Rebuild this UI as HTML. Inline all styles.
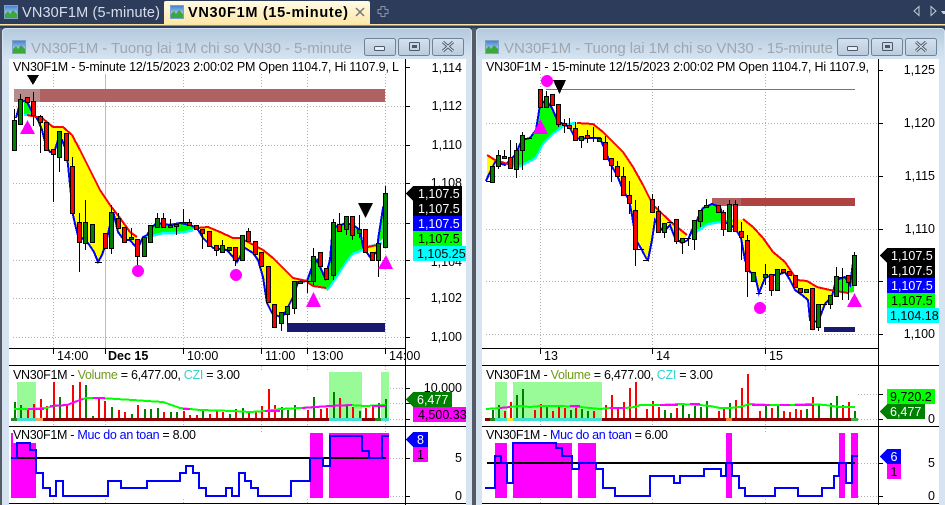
<!DOCTYPE html>
<html><head><meta charset="utf-8"><style>
html,body{margin:0;padding:0;background:#2d3c5a;width:945px;height:505px;overflow:hidden}
svg{display:block}
text{font-family:"Liberation Sans",sans-serif;font-size:12.5px;fill:#000}
.ti{font-size:15px;fill:#a0a6ae}
.w{fill:#fff}
.g{stroke:#b0b0b0;stroke-width:1;stroke-dasharray:1 2;fill:none}
.k{stroke:#000;fill:none}
.rb{fill:#f00;stroke:#000;stroke-width:1}
.gb{fill:#008000;stroke:#000;stroke-width:1}
.bl{fill:none;stroke:#00f;stroke-width:2}
.rl{fill:none;stroke:#f00;stroke-width:2}
.cy{fill:none;stroke:#0ff;stroke-width:3}
.vr{stroke:#f00;stroke-width:2;fill:none}
.vg{stroke:#008000;stroke-width:2;fill:none}
.ma{stroke:#0f0;stroke-width:2;fill:none}
.mm{stroke:#f0f;stroke-width:2;fill:none}
.st{fill:none;stroke:#00f;stroke-width:2}
</style></head><body>
<svg width="945" height="505" viewBox="0 0 945 505" xmlns="http://www.w3.org/2000/svg" shape-rendering="crispEdges">
<defs>
<linearGradient id="tab" x1="0" y1="0" x2="0" y2="1"><stop offset="0" stop-color="#fffbe6"/><stop offset="1" stop-color="#fde8a8"/></linearGradient>
<linearGradient id="win" x1="0" y1="0" x2="0" y2="1"><stop offset="0" stop-color="#b4cade"/><stop offset="1" stop-color="#d6e4f2"/></linearGradient>
<linearGradient id="btn" x1="0" y1="0" x2="0" y2="1"><stop offset="0" stop-color="#d5e1ee"/><stop offset="1" stop-color="#b9cbdc"/></linearGradient>
<linearGradient id="sky" x1="0" y1="0" x2="0" y2="1"><stop offset="0" stop-color="#3f7fd0"/><stop offset="1" stop-color="#e6f2fc"/></linearGradient>
<g id="ic"><rect x=".5" y=".5" width="13" height="13" fill="url(#sky)" stroke="#7f9fc6"/><path d="M1 13V9L4 6L6 9L9 5L13 9V13Z" fill="#3aa83a" shape-rendering="auto"/></g>
<g id="btns" shape-rendering="auto">
<rect x=".5" y=".5" width="31" height="17" rx="2" fill="url(#btn)" stroke="#6f8298"/>
<rect x="34.5" y=".5" width="31" height="17" rx="2" fill="url(#btn)" stroke="#6f8298"/>
<rect x="68.5" y=".5" width="31" height="17" rx="2" fill="url(#btn)" stroke="#6f8298"/>
<rect x="10.5" y="8.5" width="10" height="4" rx="1" fill="#e8eef5" stroke="#4a5868"/>
<rect x="45.5" y="4.5" width="10" height="8" rx="1" fill="none" stroke="#4a5868" stroke-width="1"/><rect x="48" y="7" width="5" height="3" fill="#4a5868"/>
<path d="M79 4L89 13M89 4L79 13" stroke="#4a5868" stroke-width="3" fill="none"/><path d="M79 4L89 13M89 4L79 13" stroke="#e8eef5" stroke-width="1" fill="none"/>
</g>
</defs>

<!-- top bar -->
<rect width="945" height="505" fill="#2d3c5a"/>
<path d="M164 24V3Q164 1 166 1H368Q370 1 370 3V24Z" fill="url(#tab)" shape-rendering="auto"/>
<rect y="24" width="945" height="1.5" fill="#fde6a0"/>
<use href="#ic" x="4" y="5"/><use href="#ic" x="170" y="5"/>
<text x="22" y="17" style="font-size:14.5px;fill:#d6deea" textLength="138">VN30F1M (5-minute)</text>
<text x="188" y="17" style="font-size:14.5px;font-weight:bold" textLength="160">VN30F1M (15-minute)</text>
<path d="M356 8L364 16M364 8L356 16" stroke="#777" stroke-width="1.5" shape-rendering="auto"/>
<path d="M381 6.5h4v3h3v4h-3v3h-4v-3h-3v-4h3z" fill="none" stroke="#8a94a6"/>
<path d="M919 6.5V15.5L914 11Z M931 6.5V15.5L936 11Z" fill="none" stroke="#c4ccd8" shape-rendering="auto"/>
<path d="M941 11H945V14H943Z" fill="#c4ccd8"/>

<!-- gaps -->
<rect x="0" y="28" width="2" height="477" fill="#555b66"/>
<rect x="472" y="28" width="4" height="477" fill="#555b66"/>

<!-- windows -->
<path d="M2 505V32Q2 28 6 28H468Q472 28 472 32V505Z" fill="#d6e4f2" shape-rendering="auto"/>
<path d="M3 59V32Q3 29 6 29H468Q471 29 471 32V59Z" fill="url(#win)" shape-rendering="auto"/>
<path d="M476 505V32Q476 28 480 28H941Q945 28 945 32V505Z" fill="#d6e4f2" shape-rendering="auto"/>
<path d="M477 59V32Q477 29 480 29H941Q944 29 944 32V59Z" fill="url(#win)" shape-rendering="auto"/>
<rect x="9" y="59" width="457" height="446" fill="#fff"/>
<rect x="482" y="59" width="457" height="446" fill="#fff"/>
<use href="#ic" x="12" y="40"/><use href="#ic" x="485" y="40"/>
<text class="ti" x="31" y="53" textLength="321">VN30F1M - Tuong lai 1M chi so VN30 - 5-minute</text>
<text class="ti" x="504" y="53" textLength="329">VN30F1M - Tuong lai 1M chi so VN30 - 15-minute</text>
<use href="#btns" x="364" y="38"/><use href="#btns" x="837" y="38"/>

<!-- LEFT main grid -->
<path class="g" d="M13 106.5H405M13 145.5H405M13 183.5H405M13 223.5H405M13 260.5H405M13 298.5H405M13 337.5H405M53.5 74V348M183.5 74V348M261.5 74V348M307.5 74V348M385.5 74V348"/>
<path d="M105.5 74V348" stroke="#bdbdbd" fill="none"/>
<rect x="14" y="89" width="26" height="13" fill="#b98a8a"/>
<rect x="40" y="89" width="345" height="13" fill="#b06262"/>
<rect x="287" y="323" width="98" height="9" fill="#191970"/>

<!-- LEFT cloud -->
<polygon fill="#00ffff" points="24,112 33,112 33,116 24,116"/>
<polygon fill="#00ff00" points="24,100 30,104 33,113 24,114"/>
<polygon fill="#ffff00" points="33,114 42,118 53,127 63,127 72,135 80,150 90,170 100,190 110,205 120,218 130,232 137,237 135,246 130,240 124,240 118,232 114,215 110,225 106,243 102,255 98,262 94,252 88,243 82,238 79,240 76,228 73,215 70,185 68,165 66,150 62,140 58,140 54,153 50,152 46,146 42,130 38,120"/>
<polyline class="cy" points="143,238 163,233 173,233 183,232 193,230"/>
<polygon fill="#00ff00" points="143,237 147,235 152,227 157,223 170,225 180,223 190,225 197,228 193,229 183,231 173,232 163,232"/>
<polygon fill="#ffff00" points="197,228 208,227 220,232 233,238 240,238 250,243 263,250 273,258 283,268 293,278 307,281 298,282 293,297 288,307 282,318 272,313 267,303 263,277 258,260 253,253 245,248 237,262 233,257 227,250 213,248 203,238"/>
<polyline class="cy" points="326,290 330,286 338,274 345,263 352,254 362,250 368,248"/>
<polygon fill="#00ff00" points="307,281 312,267 317,260 325,278 330,260 333,225 338,227 345,223 353,225 360,230 363,247 368,247 362,249 352,253 345,262 338,273 330,285 326,289 313,286"/>
<polyline class="cy" points="368,247 377,245 382,243"/>
<polygon fill="#ffff00" points="368,247 377,244 377,252 370,257"/>
<polygon fill="#00ff00" points="377,244 383,238 383,208 378,240"/>
<polyline class="bl" points="16,118 20,103 26,100 30,108 33,113 38,120 42,130 46,146 50,152 54,153 58,140 62,140 66,150 68,165 70,185 73,215 76,228 79,240 82,238 88,243 94,252 98,262 102,255 106,243 110,225 114,215 118,232 124,240 130,240 135,246 138,248 143,237 147,235 152,227 157,223 170,225 180,223 190,225 197,228 203,238 213,248 227,250 233,257 237,262 245,248 253,253 258,260 263,277 267,303 272,313 282,318 288,307 293,297 298,282 307,281 312,267 317,260 325,278 330,260 333,225 338,227 345,223 353,225 360,230 363,247 370,257 377,252 378,240 383,208 386,200"/>
<polyline class="rl" points="27,115 42,118 53,127 63,127 72,135 80,150 90,170 100,190 110,205 120,218 130,232 137,237"/>
<polyline class="rl" points="197,228 208,227 220,232 233,238 240,238 250,243 263,250 273,258 283,268 293,278 307,281"/>
<polyline class="rl" points="307,282 313,286 326,288"/>
<polyline class="rl" points="368,247 377,245"/>

<!-- LEFT candles -->
<path class="k" d="M14.5 109V150M20.5 94V99M33.5 92V126M40.5 115V153M53.5 154V202M59.5 157V172M72.5 157V166M79.5 213V272M85.5 200V250M111.5 205V254M118.5 213V218M131.5 228V237M137.5 256V266M157.5 213V218M163.5 213V218M170.5 219V225M176.5 226V235M183.5 209V222M189.5 219V222M202.5 233V249M216.5 250V256M222.5 240V245M235.5 260V266M248.5 228V231M281.5 323V331M287.5 314V325M294.5 308V314M307.5 281V293M313.5 248V285M333.5 219V280M339.5 213V224M346.5 229V235M352.5 235V240M359.5 215V238M378.5 260V277M385.5 186V193M95 262.5H102M180 222.5H187M304 281.5H311"/>
<path class="gb" d="M12.5 120.5h4V150.5h-4zM18.5 99.5h4V124.5h-4zM57.5 131.5h4V157.5h-4zM83.5 222.5h4V243.5h-4zM90.5 224.5h4V242.5h-4zM109.5 212.5h4V248.5h-4zM129.5 237.5h4V239.5h-4zM142.5 237.5h4V256.5h-4zM148.5 225.5h4V242.5h-4zM155.5 218.5h4V227.5h-4zM168.5 225.5h4V227.5h-4zM174.5 224.5h4V226.5h-4zM220.5 245.5h4V252.5h-4zM227.5 247.5h4V250.5h-4zM240.5 235.5h4V260.5h-4zM279.5 312.5h4V323.5h-4zM285.5 306.5h4V314.5h-4zM292.5 281.5h4V308.5h-4zM298.5 281.5h4V283.5h-4zM311.5 256.5h4V281.5h-4zM331.5 222.5h4V275.5h-4zM344.5 216.5h4V229.5h-4zM357.5 229.5h4V233.5h-4zM376.5 243.5h4V260.5h-4zM383.5 193.5h4V247.5h-4z"/>
<path class="rb" d="M25.5 97.5h4V102.5h-4zM31.5 101.5h4V115.5h-4zM38.5 116.5h4V122.5h-4zM44.5 122.5h4V150.5h-4zM51.5 149.5h4V154.5h-4zM64.5 133.5h4V160.5h-4zM70.5 166.5h4V213.5h-4zM77.5 222.5h4V242.5h-4zM103.5 233.5h4V248.5h-4zM116.5 218.5h4V228.5h-4zM122.5 227.5h4V242.5h-4zM135.5 239.5h4V256.5h-4zM161.5 218.5h4V227.5h-4zM187.5 222.5h4V225.5h-4zM194.5 225.5h4V229.5h-4zM200.5 229.5h4V233.5h-4zM207.5 231.5h4V246.5h-4zM214.5 245.5h4V250.5h-4zM233.5 247.5h4V260.5h-4zM246.5 231.5h4V241.5h-4zM253.5 241.5h4V254.5h-4zM259.5 252.5h4V266.5h-4zM266.5 266.5h4V302.5h-4zM272.5 304.5h4V327.5h-4zM318.5 252.5h4V266.5h-4zM324.5 268.5h4V279.5h-4zM337.5 224.5h4V231.5h-4zM350.5 216.5h4V235.5h-4zM363.5 229.5h4V252.5h-4zM370.5 252.5h4V260.5h-4z"/>

<!-- LEFT markers -->
<polygon points="27,75 39,75 33,85"/>
<polygon fill="#ff00ff" points="27.5,120 35,134 20,134"/>
<circle cx="138" cy="271" r="6" fill="#ff00ff"/>
<circle cx="236" cy="275" r="6" fill="#ff00ff"/>
<polygon fill="#ff00ff" points="313.5,292 321,307 306,307"/>
<polygon fill="#ff00ff" points="386,255 393,269 378,269"/>
<polygon points="358,203 373,203 365.5,218"/>

<!-- left header & axes -->
<rect x="9" y="59" width="396" height="15" fill="#fff"/>
<text x="13" y="71" textLength="386">VN30F1M - 5-minute 12/15/2023 2:00:02 PM Open 1104.7, Hi 1107.9, L</text>
<path class="k" d="M9 348.5H405.5M9 365.5H466M9 426.5H466M9 503.5H466M405.5 59V505"/>
<path class="k" d="M53.5 348V354M105.5 348V354M183.5 348V354M261.5 348V354M307.5 348V354M385.5 348V354M405 67.5H410M405 106.5H410M405 145.5H410M405 183.5H410M405 223.5H410M405 260.5H410M405 298.5H410M405 337.5H410"/>
<g text-anchor="end">
<text x="462" y="72">1,114</text><text x="462" y="110">1,112</text><text x="462" y="149">1,110</text><text x="462" y="187">1,108</text><text x="462" y="302">1,102</text><text x="462" y="341">1,100</text><text x="462" y="266">1,104</text>
</g>
<text x="57" y="360">14:00</text><text x="108" y="360" style="font-weight:bold">Dec 15</text><text x="187" y="360">10:00</text><text x="265" y="360">11:00</text><text x="312" y="360">13:00</text><text x="389" y="360">14:00</text>

<!-- LEFT price labels -->
<polygon points="406,193.5 413,186 413,201"/>
<rect x="413" y="186" width="49" height="15"/><rect x="413" y="201" width="49" height="15"/>
<rect x="413" y="216" width="49" height="15" fill="#0000ff"/><rect x="413" y="231" width="49" height="15" fill="#00ff00"/>
<rect x="413" y="246" width="53" height="15" fill="#00ffff"/>
<text class="w" x="418" y="198">1,107.5</text><text class="w" x="418" y="213">1,107.5</text><text class="w" x="418" y="228">1,107.5</text><text x="418" y="243">1,107.5</text><text x="417" y="258">1,105.25</text>

<!-- LEFT volume -->
<rect x="17" y="382" width="19" height="36" fill="#98fb98"/>
<rect x="329" y="372" width="33" height="46" fill="#98fb98"/>
<rect x="381" y="372" width="8" height="46" fill="#98fb98"/>
<rect x="11" y="418" width="378" height="3" fill="#8b0000"/>
<rect x="11" y="418" width="6" height="3" fill="#228b22"/><rect x="17" y="418" width="19" height="3" fill="#40e0d0"/><rect x="36" y="418" width="7" height="3" fill="#f4a460"/>
<rect x="329" y="418" width="33" height="3" fill="#40e0d0"/><rect x="375" y="418" width="6" height="3" fill="#228b22"/><rect x="381" y="418" width="8" height="3" fill="#40e0d0"/>
<path class="vr" d="M28 409V418M34 404V418M41 399V418M47 406V418M54 382V418M67 406V418M73 385V418M80 382V418M99 398V418M105 401V418M119 410V418M125 412V418M138 405V418M164 412V418M184 411V418M190 415V418M197 415V418M210 414V418M217 411V418M223 412V418M236 409V418M249 413V418M256 411V418M262 406V418M269 389V418M275 405V418M308 410V418M321 409V418M327 408V418M340 398V418M353 407V418M366 408V418M373 405V418"/>
<path class="vg" d="M15 402V418M21 405V418M60 397V418M86 385V418M93 416V418M112 407V418M132 414V418M145 409V418M151 409V418M158 408V418M171 412V418M177 412V418M203 410V418M230 414V418M243 408V418M282 407V418M288 410V418M295 405V418M314 397V418M334 392V418M347 404V418M360 411V418M379 403V418M386 399V418"/>
<polyline class="ma" points="14,409 28,409 46,408 54,406 67,405 80,400 86,398 100,398 133,400 147,401 163,402 180,408 200,410 233,411 250,412 265,411 280,409 300,408 330,406 350,405 365,406 386,405"/>
<path class="mm" d="M28 409H44M50 406L67 405L80 400L83 399M93 398H105M183 409H190M265 411H280M302 408L330 406L352 405M372 406H386"/>
<text x="13" y="379" textLength="227">VN30F1M - <tspan fill="#6f9a1a">Volume</tspan> = 6,477.00, <tspan fill="#38d0d0">CZI</tspan> = 3.00</text>
<path class="g" d="M390 388.5H405M390 403.5H405M390 419.5H405M53.500 421V425M105.500 421V425M183.500 421V425M261.500 421V425M307.500 421V425M385.500 421V425M261.500 366V371M307.500 366V371M385.500 366V371M53.500 499V503M105.500 499V503M183.500 499V503M261.500 428V432M307.500 499V503M385.500 428V432"/>
<path class="k" d="M405 388.5H410M405 403.5H410M405 419.5H410"/>
<text x="462" y="392" text-anchor="end">10,000</text>
<rect x="413" y="407" width="53" height="15" fill="#ff00ff"/>
<polygon points="406,399.5 413,392 413,407" fill="#008000"/><rect x="413" y="392" width="39" height="15" fill="#008000"/>
<text class="w" x="417" y="404">6,477</text><text x="418" y="419">4,500.33</text>

<!-- LEFT safety -->
<rect x="11" y="433" width="25" height="65" fill="#ff00ff"/>
<rect x="310" y="433" width="13" height="65" fill="#ff00ff"/>
<rect x="329" y="433" width="60" height="65" fill="#ff00ff"/>
<rect x="13" y="429" width="184" height="14" fill="#fff"/>
<path d="M11 458H386" stroke="#000" stroke-width="2"/>
<polyline class="st" points="11,458 17,458 17,443 30,443 30,450 36,450 36,473 43,473 43,488 50,488 50,496 56,496 56,481 63,481 63,496 108,496 108,481 121,481 121,488 147,488 147,481 180,481 180,473 186,473 186,466 193,466 193,473 199,473 199,488 206,488 206,496 226,496 226,488 232,488 232,496 239,496 239,473 245,473 245,481 251,481 251,488 258,488 258,496 291,496 291,481 310,481 310,458 323,458 323,466 330,466 330,436 362,436 362,451 369,451 369,458 382,458 382,436 389,436"/>
<text x="13" y="439" textLength="183">VN30F1M - <tspan fill="#0000ff">Muc do an toan</tspan> = 8.00</text>
<path class="g" d="M390 458.5H405M390 496.5H405"/>
<path class="k" d="M405 458.5H410M405 496.5H410"/>
<text x="462" y="462" text-anchor="end">5</text><text x="462" y="500" text-anchor="end">0</text>
<polygon points="406,439.5 413,432 413,447" fill="#0000ff"/><rect x="413" y="432" width="15" height="15" fill="#0000ff"/>
<rect x="413" y="447" width="15" height="15" fill="#ff00ff"/>
<text class="w" x="420.500" y="444" text-anchor="middle">8</text><text x="420.500" y="459" text-anchor="middle">1</text>

<!-- RIGHT grid -->
<path class="g" d="M486 123.5H878M486 176.5H878M486 229.5H878M486 281.5H878M486 334.5H878M540.500 74V348M652.500 74V348M765.500 74V348"/>
<path d="M546 89.500H855" stroke="#a96060" fill="none"/>
<rect x="712" y="198" width="29" height="8" fill="#b06060"/><rect x="741" y="198" width="114" height="8" fill="#b04242"/>
<rect x="824" y="327" width="31" height="5" fill="#191970"/>

<!-- RIGHT cloud -->
<polygon fill="#ffff00" points="487,155 495,160 500,162 495,166 490,172 487,181"/>
<polyline class="cy" points="508,165 520,166 535,158 543,143 552,134 563,126 575,123"/>
<polygon fill="#00ff00" points="500,162 505,165 515,155 522,140 530,138 536,130 540,105 546,100 552,108 558,122 564,124 575,122 563,125 552,133 543,142 535,157 520,165 508,164"/>
<polygon fill="#ffff00" points="577,123 593,124 603,132 613,142 623,152 633,167 643,185 653,205 672,223 687,235 682,243 675,238 670,225 664,232 658,225 655,220 652,240 648,260 646,258 642,250 636,240 632,215 629,200 623,190 617,175 611,165 605,150 600,138 587,138 581,139 575,138 570,128"/>
<polyline class="cy" points="693,234 707,224 719,222 743,221"/>
<polygon fill="#00ff00" points="688,238 692,230 698,218 703,208 712,204 720,207 725,222 735,221 743,220 723,220 719,221 707,223 693,233"/>
<polygon fill="#ffff00" points="743,219 753,227 763,238 773,252 785,262 797,280 807,281 817,287 830,290 832,296 825,304 818,322 810,320 808,300 802,295 795,290 790,280 785,272 778,275 772,275 765,278 759,293 755,275 750,272 745,260 741,238 735,228 725,222"/>
<polygon fill="#00ff00" points="832,292 836,278 845,277 850,285 854,258 854,292 848,293"/>
<polyline class="bl" points="486,181 490,172 495,162 505,165 515,155 522,140 530,138 536,130 540,105 546,100 552,108 558,122 564,124 570,128 575,138 581,139 587,138 600,138 605,150 611,165 617,175 623,190 629,200 632,215 636,240 642,250 646,258 648,260 652,240 655,220 658,225 664,232 670,225 675,238 682,243 688,240 692,230 698,218 703,208 712,204 720,207 725,222 735,228 741,238 745,260 750,272 755,275 759,293 765,278 772,275 778,275 785,272 790,280 795,290 802,295 808,300 810,320 818,322 825,304 832,296 836,280 845,277 850,285 854,255"/>
<polyline class="rl" points="487,155 495,160 508,164"/>
<polyline class="rl" points="577,123 593,124 603,132 613,142 623,152 633,167 643,185 653,205 672,223 687,235"/>
<polyline class="rl" points="743,219 753,227 763,238 773,252 785,262 797,280 807,281 817,287 830,290 848,293"/>

<!-- RIGHT candles -->
<path class="k" d="M498.500 150V169M504.500 150V156M510.500 140V157M516.500 143V178M522.500 132V170M546.500 91V96M558.500 124V127M564.500 119V133M569.500 118V125M575.500 122V128M581.500 140V148M587.500 130V143M593.500 127V142M605.500 136V142M611.500 165V182M617.500 161V166M623.500 167V176M629.500 181V214M635.500 200V266M652.500 194V199M658.500 206V211M664.500 232V238M676.500 241V244M682.500 242V254M688.500 238V246M694.500 239V250M700.500 221V227M706.500 199V205M723.500 210V236M729.500 200V204M735.500 200V204M741.500 222V260M747.500 235V297M765.500 264V285M771.500 290V296M818.500 327V331M830.500 304V309M836.500 267V276M842.500 268V300M848.500 282V300M854.500 252V255M486 181.500H492M525 138.500H532M590 137.500H596M638 249.500H644M643 260.500H649M667 222.500H673M685 238.500H691M756 293.500H762M821 304.500H827M839 277.500H845"/>
<path class="gb" d="M490.500 166.500h4V182.500h-4zM496.500 155.500h4V166.500h-4zM514.500 150.500h4V169.500h-4zM520.500 135.500h4V150.500h-4zM544.500 96.500h4V107.500h-4zM579.500 136.500h4V140.500h-4zM597.500 138.500h4V141.500h-4zM662.500 223.500h4V232.500h-4zM680.500 238.500h4V242.500h-4zM692.500 220.500h4V239.500h-4zM698.500 210.500h4V221.500h-4zM704.500 205.500h4V207.500h-4zM727.500 204.500h4V231.500h-4zM751.500 272.500h4V281.500h-4zM763.500 274.500h4V277.500h-4zM775.500 269.500h4V290.500h-4zM804.500 289.500h4V292.500h-4zM816.500 304.500h4V327.500h-4zM828.500 295.500h4V304.500h-4zM834.500 276.500h4V296.500h-4zM852.500 255.500h4V285.500h-4z"/>
<path class="rb" d="M502.500 156.500h4V158.500h-4zM508.500 157.500h4V168.500h-4zM538.500 89.500h4V107.500h-4zM550.500 94.500h4V105.500h-4zM556.500 104.500h4V124.500h-4zM562.500 123.500h4V125.500h-4zM567.500 125.500h4V128.500h-4zM573.500 128.500h4V140.500h-4zM585.500 135.500h4V138.500h-4zM603.500 142.500h4V159.500h-4zM609.500 158.500h4V165.500h-4zM615.500 166.500h4V176.500h-4zM621.500 176.500h4V195.500h-4zM627.500 195.500h4V203.500h-4zM633.500 210.500h4V249.500h-4zM650.500 199.500h4V212.500h-4zM656.500 211.500h4V232.500h-4zM674.500 219.500h4V241.500h-4zM716.500 205.500h4V212.500h-4zM721.500 212.500h4V229.500h-4zM733.500 204.500h4V231.500h-4zM739.500 231.500h4V237.500h-4zM745.500 240.500h4V271.500h-4zM769.500 274.500h4V290.500h-4zM781.500 269.500h4V272.500h-4zM787.500 271.500h4V275.500h-4zM793.500 275.500h4V287.500h-4zM798.500 288.500h4V292.500h-4zM810.500 288.500h4V329.500h-4zM846.500 275.500h4V282.500h-4z"/>

<!-- RIGHT markers -->
<circle cx="547" cy="81" r="6" fill="#ff00ff"/>
<polygon points="553,80 566,80 559.500,94"/>
<polygon fill="#ff00ff" points="540.500,119 548,134 533,134"/>
<circle cx="760" cy="308" r="6" fill="#ff00ff"/>
<polygon fill="#ff00ff" points="854.500,293 862,307 847,307"/>

<!-- right header & axes -->
<rect x="482" y="59" width="396" height="15" fill="#fff"/>
<text x="486" y="71" textLength="383">VN30F1M - 15-minute 12/15/2023 2:00:02 PM Open 1104.7, Hi 1107.9,</text>
<path class="k" d="M482 348.500H878.500M482 365.500H939M482 426.500H939M482 503.500H939M878.500 59V505"/>
<path class="k" d="M540.500 348V354M652.500 348V354M765.500 348V354M878 70.500H883M878 123.500H883M878 176.500H883M878 229.500H883M878 281.500H883M878 334.500H883"/>
<g text-anchor="end">
<text x="935" y="74">1,125</text><text x="935" y="127">1,120</text><text x="935" y="180">1,115</text><text x="935" y="233">1,110</text><text x="935" y="338">1,100</text>
</g>
<text x="544" y="360">13</text><text x="656" y="360">14</text><text x="769" y="360">15</text>
<polygon points="880,255.500 887,248 887,263"/>
<rect x="887" y="248" width="48" height="15"/><rect x="887" y="263" width="48" height="15"/>
<rect x="887" y="278" width="48" height="15" fill="#0000ff"/><rect x="887" y="293" width="48" height="15" fill="#00ff00"/>
<rect x="887" y="308" width="52" height="15" fill="#00ffff"/>
<text class="w" x="891" y="260">1,107.5</text><text class="w" x="891" y="275">1,107.5</text><text class="w" x="891" y="290">1,107.5</text><text x="891" y="305">1,107.5</text><text x="890" y="320">1,104.18</text>

<!-- RIGHT volume -->
<rect x="495" y="382" width="12" height="36" fill="#98fb98"/>
<rect x="513" y="382" width="89" height="36" fill="#98fb98"/>
<rect x="485" y="418" width="373" height="3" fill="#8b0000"/>
<rect x="490" y="418" width="5" height="3" fill="#228b22"/><rect x="495" y="418" width="12" height="3" fill="#40e0d0"/><rect x="507" y="418" width="6" height="3" fill="#ffe020"/><rect x="513" y="418" width="89" height="3" fill="#40e0d0"/><rect x="726" y="418" width="6" height="3" fill="#f08030"/><rect x="851" y="418" width="7" height="3" fill="#3cb043"/>
<path class="vr" d="M505 411V418M511 402V418M535 410V418M541 404V418M553 411V418M559 407V418M565 408V418M576 408V418M594 411V418M606 405V418M612 395V418M618 407V418M624 402V418M630 388V418M636 382V418M647 409V418M653 401V418M659 407V418M677 408V418M719 411V418M724 407V418M736 400V418M742 388V418M748 374V418M760 411V418M772 408V418M784 411V418M790 412V418M796 409V418M801 410V418M813 397V418M843 405V418M849 402V418"/>
<path class="vg" d="M493 410V418M499 405V418M517 395V418M523 389V418M547 407V418M571 410V418M582 409V418M588 411V418M665 410V418M671 413V418M683 405V418M689 414V418M695 406V418M701 407V418M707 401V418M730 403V418M766 404V418M778 405V418M807 409V418M819 405V418M831 403V418M837 396V418M855 411V418"/>
<polyline class="ma" points="486,409 500,408 510,407 520,406 530,407 540,406 560,406 580,407 590,408 600,409 610,408 625,408 635,407 640,405 660,405 680,404 700,405 710,406 720,408 730,408 740,407 750,404 770,405 790,405 810,404 825,405 840,407 855,407"/>
<path class="mm" d="M500 408L510 407M570 406H580M610 408H625M660 405H678M690 404H700M752 405H770M780 405H790M795 405H812"/>
<text x="486" y="379" textLength="227">VN30F1M - <tspan fill="#6f9a1a">Volume</tspan> = 6,477.00, <tspan fill="#38d0d0">CZI</tspan> = 3.00</text>
<path class="g" d="M858 394.500H878M858 419.500H878M540.500 421V425M652.500 421V425M765.500 421V425M765.500 366V371M765.500 428V432M540.500 499V503M652.500 499V503M765.500 499V503"/>
<path class="k" d="M878 394.500H883M878 419.500H883"/>
<text x="935" y="423" text-anchor="end">0</text>
<rect x="887" y="389" width="48" height="15" fill="#00ff00"/><text x="890" y="401">9,720.2</text>
<polygon points="880,411.500 887,404 887,419" fill="#008000"/><rect x="887" y="404" width="38" height="15" fill="#008000"/>
<text class="w" x="890" y="416">6,477</text>

<!-- RIGHT safety -->
<rect x="495" y="433" width="12" height="65" fill="#ff00ff"/><rect x="513" y="433" width="59" height="65" fill="#ff00ff"/><rect x="578" y="433" width="18" height="65" fill="#ff00ff"/><rect x="726" y="433" width="6" height="65" fill="#ff00ff"/><rect x="839" y="433" width="6" height="65" fill="#ff00ff"/><rect x="851" y="433" width="7" height="65" fill="#ff00ff"/>
<rect x="486" y="429" width="183" height="14" fill="#fff"/>
<path d="M487 463H855" stroke="#000" stroke-width="2"/>
<polyline class="st" points="485,488 495,488 495,456 501,456 501,463 507,463 507,483 513,483 513,443 556,443 556,448 562,448 562,456 572,456 572,469 579,469 579,463 596,463 596,469 603,469 603,488 615,488 615,496 650,496 650,476 674,476 674,483 680,483 680,476 704,476 704,469 721,469 721,476 726,476 726,463 732,463 732,476 739,476 739,488 745,488 745,496 775,496 775,488 798,488 798,496 822,496 822,488 834,488 834,476 839,476 839,463 846,463 846,483 852,483 852,456 858,456"/>
<text x="486" y="439" textLength="182">VN30F1M - <tspan fill="#0000ff">Muc do an toan</tspan> = 6.00</text>
<path class="g" d="M858 463.500H878M858 496.500H878"/>
<path class="k" d="M878 463.500H883M878 496.500H883"/>
<text x="935" y="467" text-anchor="end">5</text><text x="935" y="500" text-anchor="end">0</text>
<polygon points="880,456.500 887,449 887,464" fill="#0000ff"/><rect x="887" y="449" width="14" height="15" fill="#0000ff"/>
<rect x="887" y="464" width="14" height="15" fill="#ff00ff"/>
<text class="w" x="894" y="461" text-anchor="middle">6</text><text x="894" y="476" text-anchor="middle">1</text>
</svg>
</body></html>
